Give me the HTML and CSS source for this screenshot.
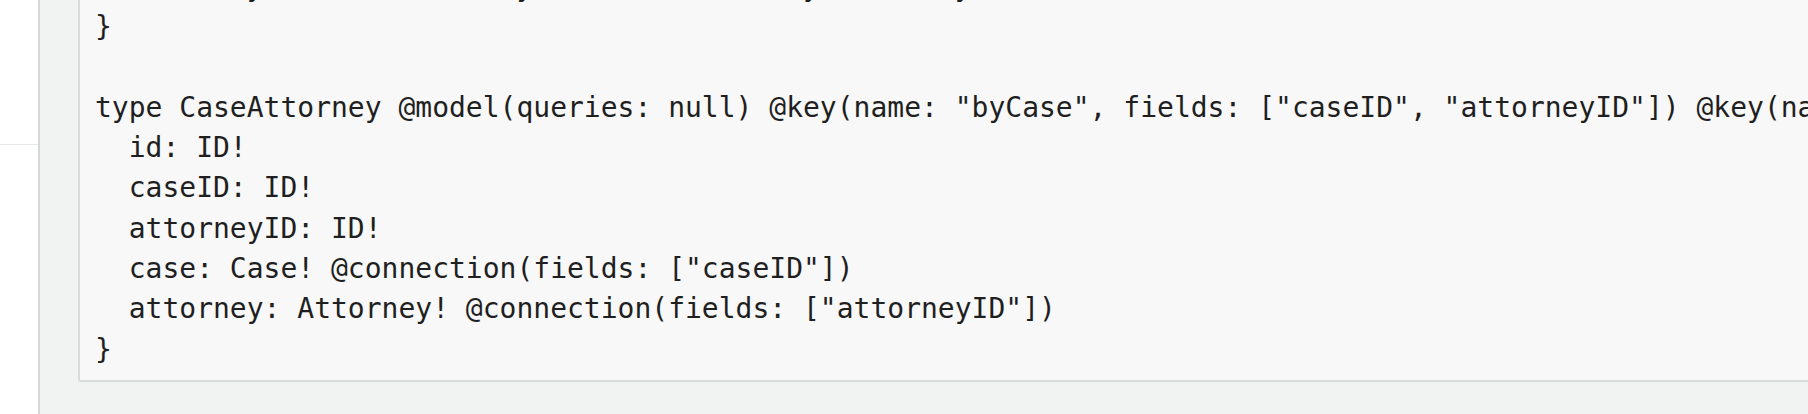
FILE: index.html
```html
<!DOCTYPE html>
<html lang="en">
<head>
<meta charset="utf-8">
<title>Schema</title>
<link rel="stylesheet" href="styles.css">
</head>
<body>
<div class="layout">
  <aside class="sidebar">
    <div class="sidebar-top"></div>
  </aside>
  <main class="content">
    <pre class="code"><code>  attorneys: [CaseAttorney] @connection(keyName: "byCase", fields: ["id"])
}

type CaseAttorney @model(queries: null) @key(name: "byCase", fields: ["caseID", "attorneyID"]) @key(name: "byAttorney", fields: ["attorneyID", "caseID"]) {
  id: ID!
  caseID: ID!
  attorneyID: ID!
  case: Case! @connection(fields: ["caseID"])
  attorney: Attorney! @connection(fields: ["attorneyID"])
}</code></pre>
  </main>
</div>
</body>
</html>
```

FILE: styles.css
```css
html, body {
  margin: 0;
  padding: 0;
  height: 100%;
  overflow: hidden;
  background: #f1f3f2;
}

.layout {
  display: flex;
  height: 414px;
}

.sidebar {
  width: 38px;
  flex: 0 0 38px;
  background: #ffffff;
  border-right: 2px solid #d5d7d7;
}

.sidebar-top {
  height: 144px;
  border-bottom: 1px solid #e7e8e8;
}

.content {
  flex: 1;
  min-width: 0;
  background: #f1f3f2;
  padding-left: 38px;
  overflow: hidden;
}

.code {
  margin: -33px 0 0 0;
  padding: 0 0 10px 15px;
  background: #f8f8f8;
  border-left: 2px solid #d6dcda;
  border-bottom: 2px solid #d6dcda;
  border-bottom-left-radius: 3px;
  font-family: "DejaVu Sans Mono", "Liberation Mono", monospace;
  font-size: 28px;
  line-height: 40.3px;
  color: #1f1f1f;
  white-space: pre;
  overflow: hidden;
}

.code code {
  font: inherit;
}
```
